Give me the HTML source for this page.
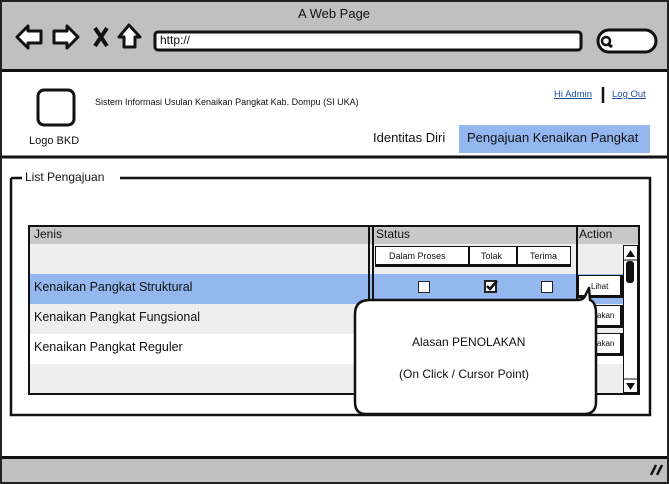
<!DOCTYPE html>
<html><head><meta charset="utf-8"><style>
*{margin:0;padding:0;box-sizing:border-box}
body{width:669px;height:484px;overflow:hidden;background:#fff;font-family:"Liberation Sans",sans-serif;color:#111;position:relative}
.a{position:absolute}
.t{position:absolute;white-space:nowrap}
</style></head><body>
<div class="a" style="left:0;top:0;width:669px;height:484px;border:2px solid #222;"></div>
<div class="a" style="left:2px;top:2px;width:665px;height:70px;background:#c0c0c0;border-bottom:3px solid #111"></div>
<div class="a" style="left:2px;top:456px;width:665px;height:26px;background:#c0c0c0;border-top:3px solid #111"></div>
<div class="t" style="left:298px;top:6px;font-size:13px">A Web Page</div>
<svg class="a" style="left:0;top:0" width="669" height="484">
<g fill="#fff" stroke="#111" stroke-width="3" stroke-linejoin="round">
<path d="M17 37 L28 26 L28 31 L41 31 L41 43 L28 43 L28 48 Z"/>
<path d="M78 37 L67 26 L67 31 L54 31 L54 43 L67 43 L67 48 Z"/>
<path d="M129 25 L140 37 L135 37 L135 47 L124 47 L124 37 L119 37 Z"/>
</g>
<path d="M95 28 L107 46 M107 28 L95 46" stroke="#111" stroke-width="4"/>
<rect x="155" y="32" width="426" height="18" rx="3" fill="#fff" stroke="#111" stroke-width="3"/>
<rect x="598" y="30" width="58" height="22" rx="11" fill="#fff" stroke="#111" stroke-width="3"/>
<circle cx="606" cy="41" r="4" fill="none" stroke="#111" stroke-width="2.5"/>
<path d="M608 44 L612 47" stroke="#111" stroke-width="3"/>
<rect x="38" y="90" width="36" height="35" rx="6" fill="#fff" stroke="#111" stroke-width="3"/>
<path d="M603 87 L603 103" stroke="#111" stroke-width="2.5"/>
<path d="M2 157 L667 157" stroke="#111" stroke-width="3"/>
<path d="M11 178 L22 178 M120 178 L650 178 L650 415 L11 415 L11 178" fill="none" stroke="#111" stroke-width="2.5"/>
<path d="M651 475 L656 465 M657 475 L662 465" stroke="#111" stroke-width="2.5"/>
</svg>
<div class="t" style="left:160px;top:33px;font-size:12px">http://</div>
<div class="t" style="left:95px;top:97px;font-size:9px">Sistem Informasi Usulan Kenaikan Pangkat Kab. Dompu (SI UKA)</div>
<div class="t" style="left:554px;top:89px;font-size:9.5px;color:#1a4d9c;text-decoration:underline">Hi Admin</div>
<div class="t" style="left:612px;top:89px;font-size:9.5px;color:#1a4d9c;text-decoration:underline">Log Out</div>
<div class="t" style="left:29px;top:135px;font-size:11px">Logo BKD</div>
<div class="t" style="left:373px;top:130px;font-size:13px">Identitas Diri</div>
<div class="a" style="left:459px;top:125px;width:191px;height:28px;background:#93b7ee"></div>
<div class="t" style="left:467px;top:130px;font-size:13px">Pengajuan Kenaikan Pangkat</div>
<div class="t" style="left:25px;top:170px;font-size:12px">List Pengajuan</div>

<!-- table -->
<div class="a" style="left:28px;top:225px;width:612px;height:170px;border:2px solid #111;background:#eee;overflow:hidden">
<div class="a" style="left:0;top:0;width:610px;height:17px;background:#c8c8c8"></div>
<div class="a" style="left:0;top:47px;width:610px;height:30px;background:#93b7ee"></div>
<div class="a" style="left:0;top:107px;width:610px;height:30px;background:#fff"></div>
<div class="a" style="left:338px;top:0;width:6px;height:168px;border-left:2px solid #111;border-right:2px solid #111"></div>
<div class="a" style="left:546px;top:0;width:2px;height:168px;background:#111"></div>
</div>
<div class="t" style="left:34px;top:227px;font-size:12px">Jenis</div>
<div class="t" style="left:376px;top:227px;font-size:12px">Status</div>
<div class="t" style="left:579px;top:227px;font-size:12px">Action</div>
<div class="t" style="left:34px;top:280px;font-size:12.5px">Kenaikan Pangkat Struktural</div>
<div class="t" style="left:34px;top:310px;font-size:12.5px">Kenaikan Pangkat Fungsional</div>
<div class="t" style="left:34px;top:340px;font-size:12.5px">Kenaikan Pangkat Reguler</div>
<div class="a" style="left:375px;top:246px;width:196px;height:21px;background:#fff;border:1.5px solid #111;border-bottom:3px solid #111"></div>
<div class="a" style="left:468px;top:246px;width:1.5px;height:21px;background:#111"></div>
<div class="a" style="left:516px;top:246px;width:1.5px;height:21px;background:#111"></div>
<div class="t" style="left:389px;top:251px;font-size:9px">Dalam Proses</div>
<div class="t" style="left:481px;top:251px;font-size:9px">Tolak</div>
<div class="t" style="left:530px;top:251px;font-size:9px">Terima</div>
<div class="a" style="left:418px;top:281px;width:12px;height:12px;border:1.5px solid #222;background:#fff"></div>
<div class="a" style="left:541px;top:281px;width:12px;height:12px;border:1.5px solid #222;background:#fff"></div>
<svg class="a" style="left:484px;top:279px" width="16" height="14"><rect x="1" y="2" width="11" height="11" fill="#fff" stroke="#222" stroke-width="2"/><path d="M3 7 L6 10 L13 2" fill="none" stroke="#111" stroke-width="2.5"/></svg>
<div class="a" style="left:578px;top:275px;width:45px;height:23px;background:#fff;border:1.5px solid #111;border-right:3px solid #111;border-bottom:3px solid #111"></div>
<div class="t" style="left:591px;top:282px;font-size:8px">Lihat</div>
<div class="a" style="left:578px;top:305px;width:45px;height:23px;background:#fff;border:1.5px solid #111;border-right:3px solid #111;border-bottom:3px solid #111"></div>
<div class="t" style="left:597px;top:311px;font-size:8px">akan</div>
<div class="a" style="left:578px;top:333px;width:45px;height:23px;background:#fff;border:1.5px solid #111;border-right:3px solid #111;border-bottom:3px solid #111"></div>
<div class="t" style="left:597px;top:339px;font-size:8px">akan</div>
<!-- scrollbar -->
<div class="a" style="left:623px;top:245px;width:15px;height:148px;background:#fff;border:1.5px solid #111"></div>
<div class="a" style="left:626px;top:261px;width:8px;height:22px;background:#111;border-radius:3px"></div>
<svg class="a" style="left:623px;top:245px" width="15" height="148"><path d="M3 12 L7.5 5 L12 12Z M3 138 L7.5 145 L12 138Z" fill="#111"/><path d="M0 15 L15 15 M0 134 L15 134" stroke="#111"/></svg>
<!-- callout -->
<svg class="a" style="left:350px;top:280px" width="260" height="140"><path d="M20 20 L228 20 Q234 20 236 14 L239 8 L240 20 Q246 22 246 34 L246 122 Q246 134 234 134 L16 134 Q5 134 5 122 L5 34 Q5 20 20 20Z" fill="#fff" stroke="#111" stroke-width="2.5" stroke-linejoin="round"/></svg>
<div class="t" style="left:412px;top:335px;font-size:12px">Alasan PENOLAKAN</div>
<div class="t" style="left:399px;top:367px;font-size:12px">(On Click / Cursor Point)</div>
</body></html>
